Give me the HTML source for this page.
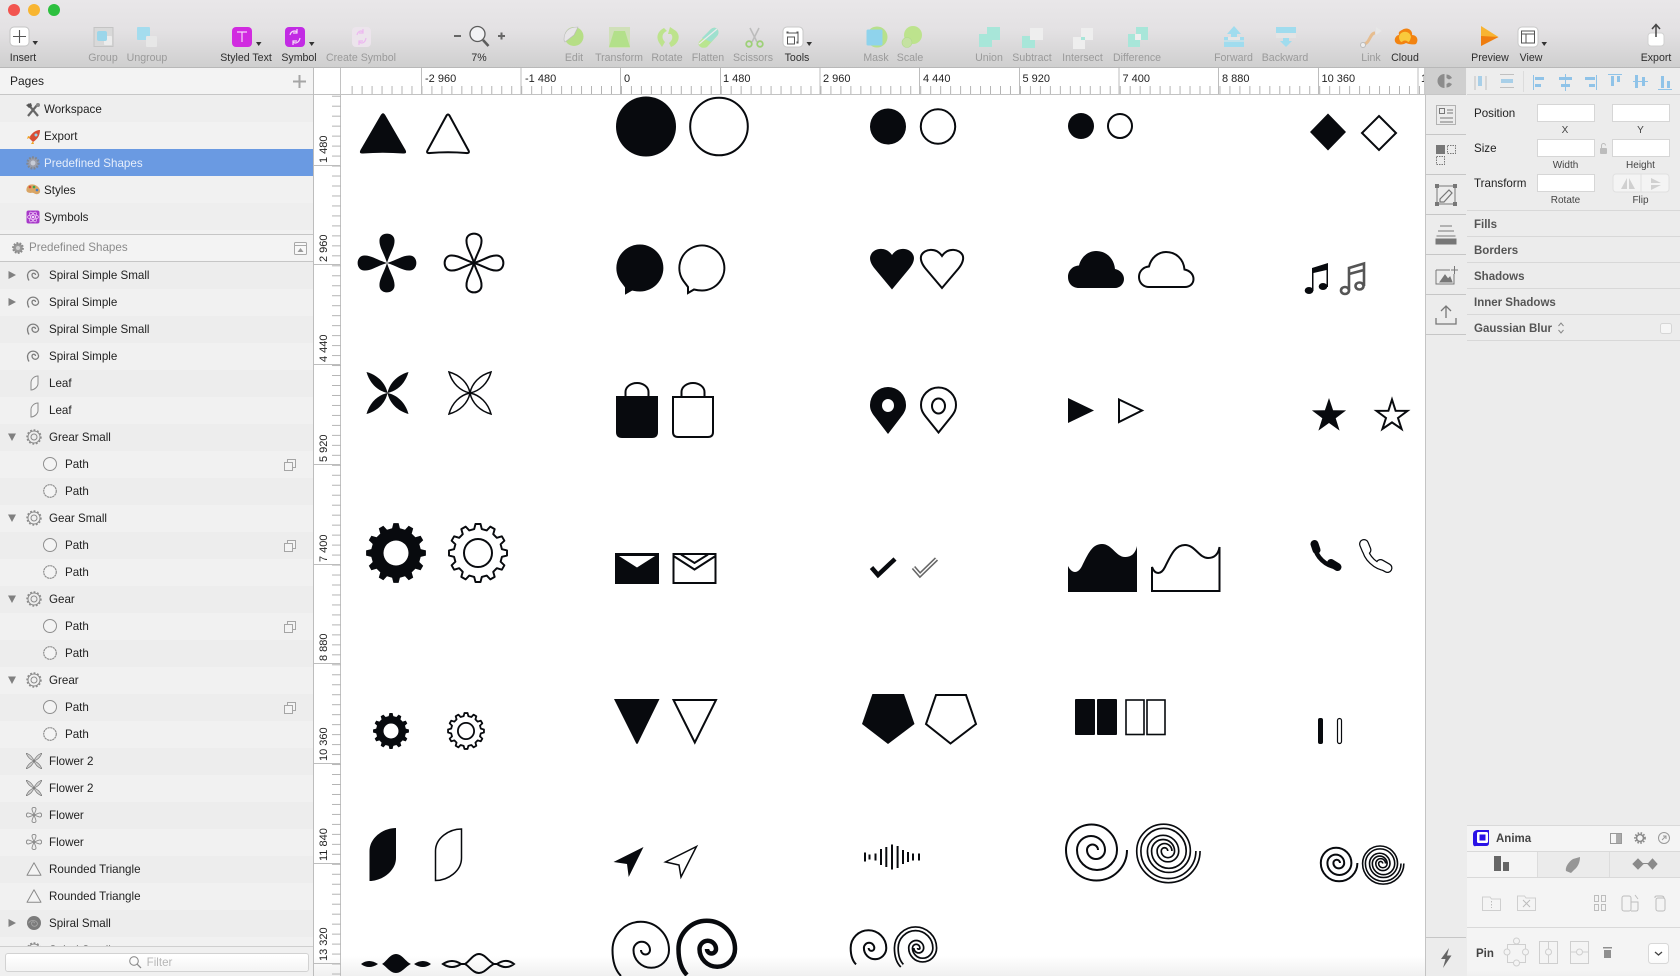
<!DOCTYPE html>
<html lang="en">
<head>
<meta charset="utf-8">
<title>Predefined Shapes</title>
<style>
html,body{margin:0;padding:0;width:1680px;height:976px;overflow:hidden;background:#fff}
#app{position:relative;width:1680px;height:976px;overflow:hidden;font-family:"Liberation Sans",sans-serif;color:#222;filter:blur(.3px)}
.abs{position:absolute}
#toolbar{left:0;top:0;width:1680px;height:67px;background:linear-gradient(#e9e7e9,#e3e1e3 45%,#cfcfcf);border-bottom:1px solid #b8b8b8}
#sidebar{left:0;top:68px;width:313px;height:908px;background:#f1f1f1;border-right:1px solid #bdbdbd}
.phead{position:absolute;left:0;top:0;width:313px;height:26px;background:#f3f3f3;border-bottom:1px solid #c6c6c6;font-size:12px;line-height:26px;text-indent:10px}
.pg{position:absolute;left:0;width:313px;height:27px;line-height:29px;font-size:11.6px;text-indent:44px}
.sel{background:#6a9ae2;color:#e6eefb}
.lhead{position:absolute;left:0;top:166px;width:313px;height:26px;background:#f3f3f3;border-top:1px solid #c6c6c6;border-bottom:1px solid #c6c6c6;font-size:11.6px;line-height:26px;text-indent:29px;color:#8b8b8b}
#layers{position:absolute;left:0;top:194px;width:313px;height:684px;overflow:hidden}
.r{position:relative;height:27px;line-height:27px;font-size:11.6px;text-indent:49px;background:#f1f1f1}
.r:nth-child(odd){background:#ededed}
.r.p{text-indent:65px}
.r svg{position:absolute;top:5px;left:26px;width:16px;height:16px}
.r.p svg.i{left:42px}
.r svg.d{left:7px;top:8px;width:10px;height:10px}
.r svg.c{left:283px;top:7px;width:14px;height:14px}
#filter{position:absolute;left:0;top:878px;width:313px;height:30px;background:#f0f0f0;border-top:1px solid #cfcfcf}
#finput{position:absolute;left:5px;top:6px;width:288px;padding-right:14px;height:17px;background:#fff;border:1px solid #d2d2d2;border-radius:3px;text-align:center;font-size:11.6px;line-height:17px;color:#b5b5b5}
#canvas{left:314px;top:68px;width:1112px;height:908px;background:#fff}
#strip{left:1425px;top:68px;width:41px;height:908px;background:#ececec;border-left:1px solid #c4c4c4;border-right:1px solid #c4c4c4}
#insp{left:1467px;top:68px;width:213px;height:908px;background:#ececec}
#over{left:0;top:0;width:1680px;height:976px;pointer-events:none}
#fade{left:0;top:956px;width:1680px;height:20px;background:linear-gradient(#fff,#f0f0f0);mix-blend-mode:darken;pointer-events:none}
svg text{font-family:"Liberation Sans",sans-serif}
.tl text{font-size:10.6px;text-anchor:middle;fill:#2e2e2e}
.tl text.o{fill:#9a9a9a}
.rl{font-size:11px;fill:#222}
.il{font-size:11.6px;fill:#222}
.is{font-size:10px;fill:#444;text-anchor:middle}
.ih{font-size:11.5px;font-weight:700;fill:#555}
.k{fill:#080a0e}
.s{fill:none;stroke:#080a0e;stroke-width:2}
</style>
</head>
<body>
<div id="app">

<svg width="0" height="0" style="position:absolute">
<defs>
<symbol id="i-sp" viewBox="0 0 16 16"><path d="M9.500 8A1.700 1.700 0 0 0 6 8A3.300 3.300 0 0 0 12.600 8A5.600 5.600 0 0 0 1.500 8C1.500 10 2 12 3 13.500" fill="none" stroke="#7d7d7d" stroke-width="1.300"/></symbol>
<symbol id="i-leaf" viewBox="0 0 16 16"><path d="M12 1V8.500C12 12 8 15 5 15V7.500C5 4 8.500 1 12 1Z" fill="#f4f4f4" stroke="#8c8c8c" stroke-width="1"/></symbol>
<symbol id="i-gear" viewBox="0 0 16 16"><circle cx="8" cy="8" r="6" fill="none" stroke="#8a8a8a" stroke-width="1"/><circle cx="8" cy="8" r="7" fill="none" stroke="#8a8a8a" stroke-width="1.400" stroke-dasharray="1.800 1.800"/><circle cx="8" cy="8" r="3" fill="none" stroke="#8a8a8a" stroke-width="1"/></symbol>
<symbol id="i-c" viewBox="0 0 16 16"><circle cx="8" cy="8" r="6.500" fill="#f4f4f4" stroke="#8f8f8f" stroke-width="1"/></symbol>
<symbol id="i-cd" viewBox="0 0 16 16"><circle cx="8" cy="8" r="6.300" fill="#f4f4f4" stroke="#8f8f8f" stroke-width="1.200" stroke-dasharray="2.200 .5"/></symbol>
<symbol id="i-x" viewBox="0 0 16 16"><path d="M8 8C9 5 11 2 16 0 14 5 11 7 8 8ZM8 8C7 5 5 2 0 0 2 5 5 7 8 8ZM8 8C9 11 11 14 16 16 14 11 11 9 8 8ZM8 8C7 11 5 14 0 16 2 11 5 9 8 8Z" fill="#d5d5d5" stroke="#808080" stroke-width=".8"/></symbol>
<symbol id="i-f" viewBox="0 0 16 16"><path d="M8 8C7 5 5.800 3 6 1.800 6.300 0 9.700 0 10 1.800 10.200 3 9 5 8 8ZM8 8C7 11 5.800 13 6 14.200 6.300 16 9.700 16 10 14.200 10.200 13 9 11 8 8ZM8 8C5 7 3 5.800 1.800 6 0 6.300 0 9.700 1.800 10 3 10.200 5 9 8 8ZM8 8C11 7 13 5.800 14.200 6 16 6.300 16 9.700 14.200 10 13 10.200 11 9 8 8Z" fill="#efefef" stroke="#8a8a8a" stroke-width=".9"/></symbol>
<symbol id="i-t" viewBox="0 0 16 16"><path d="M8 1.800 15 14.200H1Z" fill="#f4f4f4" stroke="#8a8a8a" stroke-width="1" stroke-linejoin="round"/></symbol>
<symbol id="i-ss" viewBox="0 0 16 16"><circle cx="8" cy="8" r="7" fill="#7b7b7b"/><path d="M8.500 8.300A1.500 1.500 0 0 0 5.500 8.300A3 3 0 0 0 11.500 8.300A5 5 0 0 0 2.500 8.300" fill="none" stroke="#a4a4a4" stroke-width=".9"/></symbol>
<symbol id="i-cp" viewBox="0 0 14 14"><rect x="4.500" y="1.500" width="8" height="8" fill="#f4f4f4" stroke="#a5a5a5"/><rect x="1.500" y="4.500" width="8" height="8" fill="#f4f4f4" stroke="#a5a5a5"/></symbol>
<symbol id="d-r" viewBox="0 0 10 10"><path d="M1.500 1 9 5 1.500 9Z" fill="#808080"/></symbol>
<symbol id="d-d" viewBox="0 0 10 10"><path d="M1 1.500H9L5 9Z" fill="#808080"/></symbol>
<path id="petal" d="M0 0C-3 -10 -8 -16 -7.500 -23C-7 -31.500 7 -31.500 7.500 -23C8 -16 3 -10 0 0Z"/>
<path id="xpet" d="M0 0C2 -10 10 -18 21 -21C18 -10 10 -2 0 0Z"/>
<path id="spiral" d="M5 0A5.500 5.500 0 0 0 -6 0A9 9 0 0 0 12 0A14 14 0 0 0 -16 0A20 20 0 0 0 24 0A25.500 25.500 0 0 0 -27 0A30.500 30.500 0 0 0 34 0"/>
<path id="spiral2" d="M1 0A4.500 4.500 0 0 0 10 0A8.250 8.250 0 0 0 -6.500 0A17.750 17.750 0 0 0 29 0A28.250 28.250 0 0 0 -27.500 0C-27.500 10 -25 20 -19 26"/>
<path id="gearp" stroke-linejoin="round" d="M29.900 2.600L24.700 3.900 23.300 9 27.200 12.700 24.600 17.200 19.400 15.700 15.700 19.400 17.200 24.600 12.700 27.200 9 23.300 3.900 24.700 2.600 29.900-2.600 29.900-3.900 24.700-9 23.300-12.700 27.200-17.200 24.600-15.700 19.400-19.400 15.700-24.600 17.200-27.200 12.700-23.300 9-24.700 3.900-29.900 2.600-29.900 -2.600-24.700 -3.900-23.300 -9-27.200 -12.700-24.600 -17.200-19.400 -15.700-15.700 -19.400-17.200 -24.600-12.700 -27.200-9 -23.300-3.900 -24.700-2.600 -29.900 2.600 -29.900 3.900 -24.700 9 -23.300 12.700 -27.200 17.200 -24.600 15.700 -19.400 19.400 -15.700 24.600 -17.200 27.200 -12.700 23.300 -9 24.700 -3.900 29.900 -2.600Z"/>
</defs>
</svg>

<div class="abs" id="toolbar"></div>

<div class="abs" id="sidebar">
  <div class="phead">Pages</div>
  <div class="pg" style="top:27px;background:#eeeeee">Workspace</div>
  <div class="pg" style="top:54px;background:#f2f2f2">Export</div>
  <div class="pg sel" style="top:81px">Predefined Shapes</div>
  <div class="pg" style="top:108px;background:#f1f1f1">Styles</div>
  <div class="pg" style="top:135px;background:#eeeeee">Symbols</div>
  <div class="lhead">Predefined Shapes</div>
  <div id="layers">
    <div class="r"><svg class="d"><use href="#d-r"/></svg><svg class="i"><use href="#i-sp"/></svg>Spiral Simple Small</div>
    <div class="r"><svg class="d"><use href="#d-r"/></svg><svg class="i"><use href="#i-sp"/></svg>Spiral Simple</div>
    <div class="r"><svg class="i"><use href="#i-sp"/></svg>Spiral Simple Small</div>
    <div class="r"><svg class="i"><use href="#i-sp"/></svg>Spiral Simple</div>
    <div class="r"><svg class="i"><use href="#i-leaf"/></svg>Leaf</div>
    <div class="r"><svg class="i"><use href="#i-leaf"/></svg>Leaf</div>
    <div class="r"><svg class="d"><use href="#d-d"/></svg><svg class="i"><use href="#i-gear"/></svg>Grear Small</div>
    <div class="r p"><svg class="i"><use href="#i-c"/></svg>Path<svg class="c"><use href="#i-cp"/></svg></div>
    <div class="r p"><svg class="i"><use href="#i-cd"/></svg>Path</div>
    <div class="r"><svg class="d"><use href="#d-d"/></svg><svg class="i"><use href="#i-gear"/></svg>Gear Small</div>
    <div class="r p"><svg class="i"><use href="#i-c"/></svg>Path<svg class="c"><use href="#i-cp"/></svg></div>
    <div class="r p"><svg class="i"><use href="#i-cd"/></svg>Path</div>
    <div class="r"><svg class="d"><use href="#d-d"/></svg><svg class="i"><use href="#i-gear"/></svg>Gear</div>
    <div class="r p"><svg class="i"><use href="#i-c"/></svg>Path<svg class="c"><use href="#i-cp"/></svg></div>
    <div class="r p"><svg class="i"><use href="#i-cd"/></svg>Path</div>
    <div class="r"><svg class="d"><use href="#d-d"/></svg><svg class="i"><use href="#i-gear"/></svg>Grear</div>
    <div class="r p"><svg class="i"><use href="#i-c"/></svg>Path<svg class="c"><use href="#i-cp"/></svg></div>
    <div class="r p"><svg class="i"><use href="#i-cd"/></svg>Path</div>
    <div class="r"><svg class="i"><use href="#i-x"/></svg>Flower 2</div>
    <div class="r"><svg class="i"><use href="#i-x"/></svg>Flower 2</div>
    <div class="r"><svg class="i"><use href="#i-f"/></svg>Flower</div>
    <div class="r"><svg class="i"><use href="#i-f"/></svg>Flower</div>
    <div class="r"><svg class="i"><use href="#i-t"/></svg>Rounded Triangle</div>
    <div class="r"><svg class="i"><use href="#i-t"/></svg>Rounded Triangle</div>
    <div class="r"><svg class="d"><use href="#d-r"/></svg><svg class="i"><use href="#i-ss"/></svg>Spiral Small</div>
    <div class="r"><svg class="i"><use href="#i-gear"/></svg>Spiral Small</div>
  </div>
  <div id="filter"><div id="finput"><svg width="14" height="14" viewBox="0 0 14 14" style="vertical-align:-3px;margin-right:5px"><circle cx="6" cy="6" r="4.300" fill="none" stroke="#8c8c8c" stroke-width="1.100"/><path d="M9.200 9.200 13 13" stroke="#8c8c8c" stroke-width="1.300"/></svg>Filter</div></div>
</div>

<div class="abs" id="canvas"></div>
<div class="abs" id="strip"></div>
<div class="abs" id="insp"></div>

<svg class="abs" id="over" width="1680" height="976" viewBox="0 0 1680 976">
<!-- Window buttons -->
<circle cx="14" cy="10" r="6" fill="#f2544f"/><circle cx="34" cy="10" r="6" fill="#f8b531"/><circle cx="54" cy="10" r="6" fill="#2dc03f"/>

<!-- Rulers -->
<rect x="314" y="68" width="1111" height="26" fill="#fff"/>
<rect x="314" y="68" width="27" height="908" fill="#fff"/>
<path d="M314 94.500H1425M340.500 68V976" stroke="#c2c2c2" fill="none"/>
<defs>
<pattern id="hmin" x="321.700" y="0" width="9.975" height="8" patternUnits="userSpaceOnUse"><rect width="1" height="8" fill="#b4b4b4"/></pattern>
<pattern id="vmin" x="0" y="65.800" width="9" height="9.975" patternUnits="userSpaceOnUse"><rect width="9" height="1" fill="#b4b4b4"/></pattern>
</defs>
<g transform="translate(0,86)"><rect x="351" y="0" width="1074" height="8" fill="url(#hmin)"/></g>
<g transform="translate(332,0)"><rect x="0" y="95" width="9" height="881" fill="url(#vmin)"/></g>
<path d="M421.500 68V94M521 68V94M620.500 68V94M720.500 68V94M820 68V94M919.500 68V94M1019.500 68V94M1119 68V94M1218.500 68V94M1318.500 68V94M1418 68V94" stroke="#bdbdbd" fill="none"/>
<path d="M314 165.500H341M314 264.500H341M314 364.500H341M314 464.500H341M314 564.500H341M314 663.500H341M314 763.500H341M314 863.500H341M314 963.500H341" stroke="#bdbdbd" fill="none"/>
<g class="rl">
<text x="425" y="82">-2 960</text><text x="525" y="82">-1 480</text><text x="624" y="82">0</text><text x="723" y="82">1 480</text><text x="823" y="82">2 960</text><text x="923" y="82">4 440</text><text x="1022.500" y="82">5 920</text><text x="1122.500" y="82">7 400</text><text x="1222" y="82">8 880</text><text x="1321.500" y="82">10 360</text><text x="1421" y="82">11 840</text>
</g>
<rect x="1424" y="68" width="2" height="26" fill="#ccc"/>
<g class="rl">
<text transform="translate(327,163) rotate(-90)">1 480</text>
<text transform="translate(327,262) rotate(-90)">2 960</text>
<text transform="translate(327,362) rotate(-90)">4 440</text>
<text transform="translate(327,462) rotate(-90)">5 920</text>
<text transform="translate(327,562) rotate(-90)">7 400</text>
<text transform="translate(327,661) rotate(-90)">8 880</text>
<text transform="translate(327,761) rotate(-90)">10 360</text>
<text transform="translate(327,861) rotate(-90)">11 840</text>
<text transform="translate(327,961) rotate(-90)">13 320</text>
</g>

<!-- Toolbar labels -->
<g class="tl">
<text x="23" y="61">Insert</text>
<text class="o" x="103" y="61">Group</text><text class="o" x="147" y="61">Ungroup</text>
<text x="246" y="61">Styled Text</text><text x="299" y="61">Symbol</text><text class="o" x="361" y="61">Create Symbol</text>
<text x="479" y="61">7%</text>
<text class="o" x="574" y="61">Edit</text><text class="o" x="619" y="61">Transform</text><text class="o" x="667" y="61">Rotate</text><text class="o" x="708" y="61">Flatten</text><text class="o" x="753" y="61">Scissors</text><text x="797" y="61">Tools</text>
<text class="o" x="876" y="61">Mask</text><text class="o" x="910" y="61">Scale</text>
<text class="o" x="989" y="61">Union</text><text class="o" x="1032" y="61">Subtract</text><text class="o" x="1082.500" y="61">Intersect</text><text class="o" x="1137" y="61">Difference</text>
<text class="o" x="1233.500" y="61">Forward</text><text class="o" x="1285" y="61">Backward</text>
<text class="o" x="1371" y="61">Link</text><text x="1405" y="61">Cloud</text>
<text x="1490" y="61">Preview</text><text x="1531" y="61">View</text><text x="1656" y="61">Export</text>
</g>

<!-- Toolbar icons -->
<rect x="10" y="27" width="19" height="19" rx="4" fill="#fff" stroke="#c4c4c4"/><path d="M19.500 30V43M13 36.500H26" stroke="#555" stroke-width="1.100"/>
<path d="M32.500 41H38L35.200 45Z" fill="#333"/>
<rect x="94" y="27.500" width="19" height="19" fill="#d9d9d9" stroke="#c4c4c4"/><rect x="104" y="36" width="8" height="9" rx="1" fill="#ececec"/><rect x="97" y="31" width="10" height="10" rx="2" fill="#9bd6ea"/>
<rect x="137" y="27" width="13" height="13" rx="1" fill="#a4dcee"/><rect x="146" y="36" width="11" height="11" rx="1" fill="#e7e7e7"/>
<rect x="232" y="27" width="20" height="20" rx="4" fill="#d12be0"/><path d="M237 32H247M242 32V42" stroke="#f6d7f8" stroke-width="1.200"/>
<path d="M256 42H261.500L258.700 46Z" fill="#333"/>
<rect x="285" y="27" width="20" height="20" rx="4" fill="#c22be4"/><path d="M290 35C291 31 295 30 297 32M300 38C299 43 295 44 293 42M297 29V33H293M293 45V41H297" fill="none" stroke="#f4dcf8" stroke-width="1.200"/>
<path d="M309 42H314.500L311.700 46Z" fill="#333"/>
<rect x="352" y="27" width="19" height="20" rx="4" fill="#ece4ec"/><path d="M357 35C358 31 361 30 363 32M366 38C365 43 362 44 359 42M363 29V33H359M359 45V41H363" fill="none" stroke="#ecb7f0" stroke-width="1.200"/>
<path d="M454 36H461M498 36H505M501.500 32.500V39.500" stroke="#666" stroke-width="2"/>
<circle cx="477.500" cy="34" r="7.500" fill="#f2f2f4" stroke="#5c5c5c" stroke-width="1.300"/><path d="M483 40 488.500 46" stroke="#5c5c5c" stroke-width="2.600"/>
<circle cx="574" cy="36.500" r="9.500" fill="#b6de86"/><path d="M564 40C564 30 570 27 578 27L574 35 565 42Z" fill="#e7e5e7" stroke="#bcbcbc" stroke-width=".6"/>
<rect x="609" y="27" width="21" height="21" fill="#d0e0b9"/><path d="M614 31H625L630 47H609Z" fill="#b3e08a"/>
<path d="M664 28C658 31 655 37 660 44L662 47L665 42C661 38 662 33 667 31ZM670 27L676 31C682 37 677 45 671 47L669 43C673 40 673 36 671 34L668 34Z" fill="#bde38d"/>
<path d="M701 40 711 29C716 25 721 31 717 36L707 47C701 50 695 44 701 40Z" fill="#b9e58f"/><path d="M702 38 711 29C716 25 721 31 717 36L711 42Z" fill="#9fe0cf"/><path d="M699 44 717 29" stroke="#eceaec" stroke-width="1.200"/>
<path d="M750 28 757 42M759 28 752 42" stroke="#bdbdbd" stroke-width="1.600"/><circle cx="749" cy="44" r="2.800" fill="none" stroke="#9dd077" stroke-width="1.800"/><circle cx="760" cy="44" r="2.800" fill="none" stroke="#9dd077" stroke-width="1.800"/>
<rect x="783" y="27" width="20" height="20" rx="4" fill="#fff" stroke="#c8c8c8"/><rect x="787.500" y="37" width="7" height="7" fill="none" stroke="#555"/><path d="M788 33H797M798 33V43" stroke="#555"/><rect x="786.500" y="31.500" width="2" height="2" fill="#555"/><rect x="796.500" y="31.500" width="2" height="2" fill="#555"/><rect x="796.500" y="41.500" width="2" height="2" fill="#555"/>
<path d="M806.500 42H812L809.200 46Z" fill="#333"/>
<circle cx="877" cy="37" r="10.500" fill="#b7e08c"/><rect x="866.500" y="29.500" width="16" height="16" rx="1.500" fill="#8fd3ec"/>
<circle cx="913" cy="35" r="9" fill="#bde38d"/><circle cx="907" cy="42.500" r="5" fill="#c5e2a2" stroke="#b0d98a" stroke-width=".6"/>
<path d="M987 27H1000V40H992V47H979V34H987Z" fill="#a8e6d9"/>
<rect x="1022" y="36" width="13" height="12" fill="#a8e6d9"/><rect x="1030" y="28" width="13" height="12" fill="#eeeeee"/>
<rect x="1073" y="37" width="12" height="12" fill="#eeeeee"/><rect x="1081" y="28" width="12" height="12" fill="#eeeeee"/><rect x="1081" y="37" width="4" height="3" fill="#a8e6d9"/>
<path d="M1136 27H1148V40H1140V47H1128V34H1136Z" fill="#a8e6d9"/><rect x="1135" y="34" width="6" height="6" fill="#eeeeee"/>
<path d="M1234 26 1241 34H1237V37H1244V47H1224V37H1231V34H1227Z" fill="#a0dcee"/><rect x="1228" y="37" width="12" height="3" fill="#e6e6e6"/><path d="M1224 41H1244" stroke="#e6e6e6"/>
<rect x="1276" y="27" width="20" height="6" fill="#a0dcee"/><rect x="1276" y="33" width="20" height="5" fill="#e4e4e4"/><path d="M1283 38H1289V41H1292L1286 47 1280 41H1283Z" fill="#a0dcee"/>
<path d="M1364 44C1370 43 1370 33 1375 33" fill="none" stroke="#e6bd90" stroke-width="3"/><path d="M1376 27 1382 31 1376 35Z" fill="#e7e7e7"/><circle cx="1363" cy="45" r="2.500" fill="#eee" stroke="#bbb"/>
<path d="M1402 30C1408 26 1413 31 1412 35 1417 35 1419 40 1416 44 1413 45 1408 44 1406 43 1403 45 1398 45 1396 43 1393 40 1396 35 1399 35 1398 32 1400 31 1402 30Z" fill="#f28311"/><path d="M1399 37C1400 30 1410 30 1411 37 1410 41 1409 42 1408 42 1407 40 1403 40 1402 42 1400 42 1399 39 1399 37Z" fill="#f9c93c"/>
<path d="M1481 26 1498.500 37 1481 46Z" fill="#f8b431"/><path d="M1481 36 1498.500 37 1481 46Z" fill="#ef7d10"/>
<rect x="1518" y="27" width="20" height="20" rx="4" fill="#fff" stroke="#c8c8c8"/><rect x="1521.500" y="31" width="13" height="12" fill="none" stroke="#555"/><path d="M1521.500 34H1534.500M1526 34V43" stroke="#555"/>
<path d="M1541.500 42H1547L1544.200 46Z" fill="#333"/>
<rect x="1648" y="33" width="16" height="13" rx="3" fill="#fff" stroke="#d0d0d0"/><path d="M1656 25V37M1652 29 1656 24.500 1660 29" fill="none" stroke="#444" stroke-width="1.500"/>

<!-- Pages icons -->
<path d="M28 104 38 116M38 104 28 116" stroke="#666" stroke-width="2.200"/><path d="M26 105 31 103 32 106 29 108Z" fill="#555"/><circle cx="38" cy="105" r="2" fill="#888"/>
<path d="M40 130C35 130 31 134 29 138L33 142C36 140 40 137 40 130Z" fill="#d74c35"/><path d="M31 137 28 136 27 139ZM33 141 34 144 31 144Z" fill="#f0a324"/><circle cx="36" cy="135" r="1.500" fill="#8fd3ec"/>
<circle cx="33" cy="163" r="5.500" fill="#9a9eab" stroke="#7f8794" stroke-width="2.400" stroke-dasharray="1.800 1.300"/><circle cx="33" cy="163" r="2.500" fill="#c7ccd6"/>
<path d="M26.500 189C27 184 33 183 37 186 41 189 41 193 38 194 35 195 34 192 31 193 27 193 26 191 26.500 189Z" fill="#d9a565"/><circle cx="30" cy="187" r="1.300" fill="#d64a34"/><circle cx="34" cy="187" r="1.300" fill="#3aa24e"/><circle cx="37" cy="190" r="1.300" fill="#3b7cd4"/>
<rect x="26.500" y="210.500" width="13" height="13" rx="2" fill="#a738c9"/><circle cx="33" cy="217" r="1.300" fill="#f3d4fa"/><ellipse cx="33" cy="217" rx="5.500" ry="2.300" fill="none" stroke="#f0c8f8" stroke-width=".7"/><ellipse cx="33" cy="217" rx="5.500" ry="2.300" fill="none" stroke="#f0c8f8" stroke-width=".7" transform="rotate(60 33 217)"/><ellipse cx="33" cy="217" rx="5.500" ry="2.300" fill="none" stroke="#f0c8f8" stroke-width=".7" transform="rotate(-60 33 217)"/>
<path d="M299.500 75V88M293 81.500H306" stroke="#a5a5a5" stroke-width="2"/>
<circle cx="18" cy="248" r="4.800" fill="#9a9a9a" stroke="#8a8a8a" stroke-width="2.200" stroke-dasharray="1.700 1.300"/><circle cx="18" cy="248" r="2" fill="#cfcfcf"/>
<rect x="294.500" y="242.500" width="12" height="12" rx="1" fill="#f8f8f8" stroke="#a9a9a9"/><path d="M294.500 245.500H306.500" stroke="#a9a9a9"/><path d="M297.500 252H303.500L300.500 248Z" fill="#9a9a9a"/>

<!-- Canvas shapes row 1 -->
<path class="k" id="tri" d="M380.500 115.500Q383 111 385.500 115.500L405.500 150Q407.500 154 403 153.500Q383 152 363 153.500Q358.500 154 360.500 150Z"/>
<path class="s" d="M446 116.500Q448 112.500 450 116.500L468.500 150.500Q470 153.500 466 153Q448 151.500 430 153Q426 153.500 427.500 150.500Z"/>
<circle class="k" cx="646" cy="126.500" r="30"/>
<circle class="s" cx="719" cy="126.500" r="28.800"/>
<circle class="k" cx="888" cy="126.500" r="18"/>
<circle class="s" cx="938" cy="126.500" r="17.200"/>
<circle class="k" cx="1081" cy="126" r="13"/>
<circle class="s" cx="1120" cy="126" r="12"/>
<path class="k" d="M1328 113.500 1346 132 1328 150.500 1310 132Z"/>
<path class="s" d="M1379 116 1396 133 1379 150 1362 133Z"/>

<!-- Row 2 -->
<g class="k" transform="translate(387,263)"><use href="#petal"/><use href="#petal" transform="rotate(90)"/><use href="#petal" transform="rotate(180)"/><use href="#petal" transform="rotate(270)"/></g>
<g class="s" transform="translate(474,263)"><use href="#petal"/><use href="#petal" transform="rotate(90)"/><use href="#petal" transform="rotate(180)"/><use href="#petal" transform="rotate(270)"/></g>
<path class="k" stroke="#080a0e" stroke-width="2" d="M621.500 281 626 287 626 293 632 289.500Q636 290.500 640 290.500A22.500 22.500 0 1 0 621.500 281Z"/>
<path class="s" d="M683.500 281 688 287 688 293 694 289.500Q698 290.500 702 290.500A22.500 22.500 0 1 0 683.500 281Z"/>
<path class="k" d="M892 289.500 875 269C870 263 869 258 871 254.500 874 248 886 246 892 255 898 246 910 248 913 254.500 915 258 914 263 909 269Z"/>
<path class="s" d="M942 288 925.500 268.500C921 263 920 258 921.500 255 924.500 249 936 247 942 256 948 247 959.500 249 962.500 255 964 258 963 263 958.500 268.500Z"/>
<path class="k" d="M1079 288C1072 288 1068 283 1068 277 1068 271 1072 266 1079 265.500 1081 257 1088 251 1096 251 1106 251 1114 258 1115 269 1120 270 1124 274 1124 279 1124 284 1120 288 1115 288Z"/>
<path class="s" d="M1149 287C1143 287 1139 282.500 1139 277 1139 271.500 1143 267 1149 266.500 1151 258 1158 252 1166 252 1176 252 1183.500 259 1184.500 269.500 1189.500 270.500 1193.500 274 1193.500 279 1193.500 284 1189.500 287 1185 287Z"/>
<g><ellipse class="k" cx="1309" cy="290.500" rx="4.300" ry="3.500"/><ellipse class="k" cx="1323" cy="286.500" rx="4.300" ry="3.500"/><path class="k" d="M1312 268 1328 263V287H1326.500V270L1313.500 273V291H1312Z"/></g>
<g fill="none" stroke="#555" stroke-width="2.600"><ellipse cx="1345" cy="290.500" rx="4" ry="3.500"/><ellipse cx="1359.500" cy="286" rx="4" ry="3.500"/><path d="M1349 290.500V268L1364 263.500V286M1349 274 1364 270"/></g>

<!-- Row 3 -->
<g class="k" transform="translate(387.500,393)"><use href="#xpet"/><use href="#xpet" transform="rotate(90)"/><use href="#xpet" transform="rotate(180)"/><use href="#xpet" transform="rotate(270)"/></g>
<g class="s" style="stroke-width:1.500" transform="translate(470,393)"><use href="#xpet"/><use href="#xpet" transform="rotate(90)"/><use href="#xpet" transform="rotate(180)"/><use href="#xpet" transform="rotate(270)"/></g>
<path class="k" d="M616 396H658V432Q658 438 652 438H622Q616 438 616 432Z"/>
<path class="s" d="M625.500 397V392A11.500 9 0 0 1 648.500 392V397"/>
<path class="s" d="M673 397H713V432Q713 437 708 437H678Q673 437 673 432Z"/>
<path class="s" d="M681.500 397V392A11.500 9 0 0 1 704.500 392V397"/>
<path class="k" fill-rule="evenodd" d="M888 434 875 417C871 412 870 409 870 405A18 18 0 0 1 906 405C906 409 905 412 901 417ZM888 399A6 6.500 0 1 0 888 412A6 6.500 0 1 0 888 399Z"/>
<path class="s" d="M938.500 432.500 926 417C922 412 921 409 921 405A17.500 17.500 0 0 1 956 405C956 409 955 412 951 417Z"/>
<ellipse class="s" cx="938.500" cy="406" rx="6.500" ry="7.500"/>
<path class="k" d="M1068 398 1094 410.500 1068 423Z"/>
<path class="s" d="M1119 399.500 1142 410.500 1119 422Z"/>
<polygon class="k" points="1329,398 1333.100,410.300 1346.100,410.400 1335.700,418.200 1339.600,430.600 1329,423 1318.400,430.600 1322.300,418.200 1311.900,410.400 1324.900,410.300"/>
<polygon class="s" points="1392,399.500 1395.600,410.800 1407.500,410.900 1398,418 1401.600,429 1392,422.400 1382.400,429 1386,418 1376.500,410.900 1388.400,410.800"/>

<!-- Row 4 -->
<g transform="translate(396,553)"><use href="#gearp" class="k"/><circle r="12.500" fill="#fff"/></g>
<g transform="translate(478,553)"><use href="#gearp" fill="none" stroke="#080a0e" stroke-width="2" transform="scale(.97)"/><circle class="s" r="14"/></g>
<path class="k" d="M615 553H659V584H615Z"/><path d="M619 556H655L637 567.500Z" fill="#fff"/>
<rect class="s" x="673.500" y="554" width="42" height="29"/><path class="s" d="M673.500 556 694.500 569.500 715.500 556M681 554.500 694.500 563 708 554.500"/>
<path d="M871.500 567.500 878 575 895 559" fill="none" stroke="#080a0e" stroke-width="4.500"/>
<path d="M913.500 567.500 920 575 936.500 559" fill="none" stroke="#666" stroke-width="4.500"/><path d="M913.500 567.500 920 575 936.500 559" fill="none" stroke="#fff" stroke-width="1.400"/>
<path class="k" d="M1068 592V566C1072 574 1078 574 1082 566 1088 554 1092 544 1102 544 1112 544 1116 557 1125 557 1130 557 1135 555 1137 546V592Z"/>
<path class="s" d="M1152 591V567C1155 575 1161 575 1165 567 1171 555 1175 545 1185 545 1195 545 1199 558 1208 558 1213 558 1218 556 1219.500 547V591Z"/>
<g fill="none" stroke="#080a0e" stroke-linecap="round"><path d="M1315 547C1316 557 1326 566 1336 567" stroke-width="4.500"/><path d="M1314.500 544 1316.500 550M1331 563 1337.500 567" stroke-width="8"/></g>
<g fill="none" stroke-linecap="round"><g stroke="#080a0e"><path d="M1365 548C1366 558 1376 567 1386 568" stroke-width="7"/><path d="M1364 544 1366.500 550M1380.500 564 1387.500 568" stroke-width="10"/></g><g stroke="#fff"><path d="M1365 548C1366 558 1376 567 1386 568" stroke-width="4.500"/><path d="M1364 544 1366.500 550M1380.500 564 1387.500 568" stroke-width="7.500"/></g></g>

<!-- Row 5 -->
<g transform="translate(391,731) scale(.6)"><use href="#gearp" class="k"/><circle r="12.500" fill="#fff"/></g>
<g transform="translate(466,731) scale(.6)"><use href="#gearp" fill="none" stroke="#080a0e" stroke-width="3"/><circle r="13.500" fill="none" stroke="#080a0e" stroke-width="3"/></g>
<path class="k" d="M614 699H659.500L638 743Q637 745 636 743Z"/>
<path class="s" d="M673.500 700H716L694.800 742.500Z"/>
<path class="k" d="M872.400 694H904L914.500 724 888 744 862 724Z"/>
<path class="s" d="M936 695H966L976 724 950.500 743.500 926 724Z"/>
<rect class="k" x="1075" y="699" width="20" height="36" rx="1"/><rect class="k" x="1097" y="699" width="20" height="36" rx="1"/>
<rect class="s" style="stroke-width:1.600" x="1126" y="700" width="18" height="34.500"/><rect class="s" style="stroke-width:1.600" x="1147" y="700" width="18" height="34.500"/>
<rect class="k" x="1318" y="718" width="5" height="26" rx="2"/>
<rect class="s" style="stroke-width:1.200" x="1337.500" y="718.500" width="4" height="25" rx="2"/>

<!-- Row 6 -->
<path class="k" d="M396 828V858C396 871 382 881 369.500 881V851C369.500 838 383 828 396 828Z"/>
<path class="s" style="stroke-width:1.500" d="M461.500 829V858C461.500 871 448 880.500 435.500 880.500V851C435.500 838 449 829 461.500 829Z"/>
<path class="k" d="M643.500 847 613.500 862 627 864 628.700 877Z"/>
<path class="s" style="stroke-width:1.500" d="M696.500 846.500 665.500 862 679 865 681 877Z"/>
<path fill="none" stroke="#080a0e" stroke-width="2" d="M865 852.500V861.500M869.500 854.500V859.500M875.500 853.500V860.500M881 849V865M886.300 847V867M892 844.500V869.500M897.600 846V868M903 850V864M908 852V862M913 853.500V860.500M919 853.500V860.500"/>
<use href="#spiral" transform="translate(1093,850)" class="s"/>
<g transform="translate(1165,851) scale(.97)" fill="none"><use href="#spiral" stroke="#080a0e" stroke-width="6"/><use href="#spiral" stroke="#fff" stroke-width="2.600"/></g>
<use href="#spiral" transform="translate(1337,863) scale(.6)" fill="none" stroke="#080a0e" stroke-width="3.300"/>
<g transform="translate(1381,863.500) scale(.63)" fill="none"><use href="#spiral" stroke="#080a0e" stroke-width="7"/><use href="#spiral" stroke="#fff" stroke-width="2"/></g>

<!-- Row 7 -->
<path class="k" d="M361 964C366 960 372 960 378 964L382 964C386 962 390 954 396 954 402 954 406 962 411 964L414 964C420 960 426 960 431 964 426 968 420 968 414 964L411 964C406 966 402 973 396 973 390 973 386 966 382 964L378 964C372 968 366 968 361 964Z"/>
<path class="s" d="M443 964C449 960 455 960 461 964L465 964C469 962 473 954 479 954 485 954 489 962 494 964L497 964C503 960 509 960 514 964 509 968 503 968 497 964L494 964C489 966 485 973 479 973 473 973 469 966 465 964L461 964C455 968 449 968 443 964Z"/>
<use href="#spiral2" transform="translate(640,950)" class="s"/>
<use href="#spiral2" transform="translate(706,949)" fill="none" stroke="#080a0e" stroke-width="4.500"/>
<use href="#spiral2" transform="translate(868,948) scale(.63)" fill="none" stroke="#080a0e" stroke-width="3.200"/>
<g transform="translate(915,948) scale(.68)" fill="none"><use href="#spiral2" stroke="#080a0e" stroke-width="8"/><use href="#spiral2" stroke="#fff" stroke-width="3"/></g>

<!-- Canvas right edge / strip -->
<rect x="1426" y="68" width="40" height="26" fill="#cfcfcf"/>
<path d="M1444.500 74A7 7 0 0 0 1444.500 88ZM1446.500 74.500A6.500 6.500 0 0 1 1452 78L1449 79.500 1446.500 78ZM1446.500 87.500A6.500 6.500 0 0 0 1452 84L1449 82.500 1446.500 84Z" fill="#8c8c8c"/>
<path d="M1426 94.500H1466M1426 134.500H1466M1426 174.500H1466M1426 214.500H1466M1426 254.500H1466M1426 294.500H1466M1426 334.500H1466M1426 937.500H1466" stroke="#c6c6c6"/>
<g fill="none" stroke="#777">
<rect x="1436.500" y="105.500" width="19" height="19" stroke-dasharray="1 1"/><path d="M1440 118H1453M1440 122H1453M1447 110H1453M1447 113H1453"/><rect x="1439.500" y="108.500" width="5" height="5"/>
<rect x="1436.500" y="145.500" width="8" height="8" fill="#777"/><rect x="1447.500" y="145.500" width="8" height="8" stroke-dasharray="1.500 1"/><rect x="1436.500" y="156.500" width="8" height="8" stroke-dasharray="1.500 1"/>
<rect x="1437" y="186" width="18" height="18"/><path d="M1440 199 1449 190 1452 193 1444 202H1440Z" stroke-width="1.200"/><rect x="1435.500" y="184.500" width="3" height="3" fill="#777"/><rect x="1453.500" y="184.500" width="3" height="3" fill="#777"/><rect x="1453.500" y="202.500" width="3" height="3" fill="#777"/><rect x="1435.500" y="202.500" width="3" height="3" fill="#777"/>
<path d="M1440 226H1452M1438 231H1454M1436.500 236H1455.500"/><rect x="1436" y="239" width="20" height="5" fill="#777"/>
<path d="M1436 270V284H1454V274M1436 270H1450M1451 270H1458M1454.500 266V274"/><path d="M1440 282 1445 275 1448 279 1450 277 1452 282Z" fill="#777"/>
<path d="M1436 318V324H1456V318M1446 318V306M1441 311 1446 306 1451 311" stroke-width="1.300"/>
</g>
<path d="M1449 948 1441 959H1445.500L1443 968 1451.500 955.500H1447Z" fill="#666"/>

<!-- Inspector -->
<path d="M1467 94.500H1680" stroke="#d4d4d4"/>
<rect x="1467" y="68" width="213" height="26" fill="#ededed"/>
<path d="M1523.500 71V92" stroke="#dcdcdc"/>
<g fill="none" stroke="#c0c0c0"><path d="M1475 76V90M1486 76V90M1500 74.500H1514M1500 87.500H1514"/></g>
<rect x="1478" y="76" width="4" height="10" fill="#a8cfe8"/><rect x="1501" y="79" width="12" height="4" fill="#a8cfe8"/>
<g fill="#8fc3e8" stroke="none">
<rect x="1533" y="75" width="1" height="15"/><rect x="1535" y="77" width="9" height="3"/><rect x="1535" y="84" width="6" height="3"/>
<rect x="1565" y="74" width="1" height="17"/><rect x="1559" y="77" width="13" height="3"/><rect x="1561" y="84" width="9" height="3"/>
<rect x="1596" y="75" width="1" height="15"/><rect x="1585" y="77" width="10" height="3"/><rect x="1589" y="84" width="6" height="3"/>
<rect x="1608" y="74" width="14" height="1"/><rect x="1611" y="76" width="3" height="10"/><rect x="1617" y="76" width="3" height="6"/>
<rect x="1633" y="81" width="15" height="1"/><rect x="1635" y="75" width="3" height="13"/><rect x="1642" y="77" width="3" height="9"/>
<rect x="1658" y="89" width="14" height="1"/><rect x="1661" y="76" width="3" height="12"/><rect x="1667" y="81" width="3" height="7"/>
</g>
<text class="il" x="1474" y="117">Position</text>
<text class="il" x="1474" y="152">Size</text>
<text class="il" x="1474" y="187">Transform</text>
<g fill="#fff" stroke="#d6d6d6">
<rect x="1537.500" y="104.500" width="57" height="17"/><rect x="1612.500" y="104.500" width="57" height="17"/>
<rect x="1537.500" y="139.500" width="57" height="17"/><rect x="1612.500" y="139.500" width="57" height="17"/>
<rect x="1537.500" y="174.500" width="57" height="17"/>
</g>
<rect x="1613" y="174" width="56" height="18" rx="3" fill="#f4f4f4" stroke="#e0e0e0"/><path d="M1641 174V192" stroke="#e0e0e0"/>
<path d="M1627 178V189H1621ZM1629 178 1635 189H1629Z" fill="#d0d0d0"/><path d="M1651 178 1661 183H1651ZM1651 185H1661L1651 190Z" fill="#d0d0d0"/>
<g class="is"><text x="1565" y="133">X</text><text x="1640.500" y="133">Y</text><text x="1565.500" y="168">Width</text><text x="1640.500" y="168">Height</text><text x="1565.500" y="203">Rotate</text><text x="1640.500" y="203">Flip</text></g>
<rect x="1600" y="148" width="7" height="6" rx="1" fill="#bcbcbc"/><path d="M1601.500 148V145.500A2 2 0 0 1 1605.500 145.500" fill="none" stroke="#bcbcbc"/>
<path d="M1467 210.500H1680M1467 236.500H1680M1467 262.500H1680M1467 288.500H1680M1467 314.500H1680M1467 340.500H1680" stroke="#d8d8d8"/>
<g class="ih"><text x="1474" y="228">Fills</text><text x="1474" y="254">Borders</text><text x="1474" y="280">Shadows</text><text x="1474" y="306">Inner Shadows</text><text x="1474" y="332">Gaussian Blur</text></g>
<path d="M1558.500 326 1561 323 1563.500 326M1558.500 330 1561 333 1563.500 330" fill="none" stroke="#888"/>
<rect x="1660.500" y="323.500" width="11" height="10" rx="2" fill="#f6f6f6" stroke="#d6d6d6"/>

<!-- Anima -->
<rect x="1467" y="825" width="213" height="151" fill="#f4f4f4"/>
<path d="M1467 825.500H1680M1467 851.500H1680M1467 877.500H1680M1467 927.500H1680" stroke="#d9d9d9"/>
<rect x="1537" y="852" width="143" height="25" fill="#ebebeb"/><path d="M1537.500 852V877M1609.500 852V877" stroke="#dcdcdc"/>
<path d="M1477 830H1489V843Q1489 846 1486 846H1476Q1473 847 1473 843V834Q1473 831 1477 830Z" fill="#2a12e6"/><rect x="1477" y="832" width="11" height="11" rx="1.500" fill="#fff"/><rect x="1479.500" y="834.500" width="6" height="6" fill="#2a12e6"/>
<text x="1496" y="842" style="font-size:11.500px;font-weight:700;fill:#444">Anima</text>
<rect x="1610.500" y="833.500" width="11" height="10" fill="#f6f6f6" stroke="#999"/><rect x="1616" y="834" width="5" height="9" fill="#aaa"/>
<circle cx="1640" cy="838" r="3.500" fill="none" stroke="#8a8a8a" stroke-width="1.600"/><circle cx="1640" cy="838" r="5" fill="none" stroke="#8a8a8a" stroke-width="1.800" stroke-dasharray="1.500 1.500"/>
<circle cx="1664" cy="838" r="5.500" fill="none" stroke="#999"/><path d="M1662 840 1666 836M1663 836H1666V839" fill="none" stroke="#999"/>
<path d="M1494 856H1501V871H1494ZM1503 862H1509V871H1503Z" fill="#666"/>
<path d="M1566 871C1565 868 1568 862 1573 859L1580 857C1580 862 1578 867 1574 870L1571 873ZM1566 866 1570 863 1566 866Z" fill="#969696"/>
<path d="M1633 864 1638 859 1643 864 1638 869ZM1648 864 1652.500 859 1657 864 1652.500 869ZM1641 863.500H1650" fill="#8a8a8a" stroke="#8a8a8a" stroke-width="1"/>
<g fill="none" stroke="#cfcfcf">
<path d="M1482.500 897V910.500H1500.500V899H1491.500L1490 897Z"/><path d="M1517.500 896V910.500H1535.500V898H1526L1524.500 896Z"/><path d="M1523 900 1530 907M1530 900 1523 907" stroke="#bcbcbc"/>
<path d="M1491.500 901V908" stroke="#bbb" stroke-dasharray="1.500 1.500"/>
<g stroke="#bdbdbd"><rect x="1594.500" y="895.500" width="4" height="6"/><rect x="1601.500" y="895.500" width="4" height="6"/><rect x="1594.500" y="904.500" width="4" height="6"/><rect x="1601.500" y="904.500" width="4" height="6"/>
<rect x="1622" y="896" width="9" height="15" rx="2"/><path d="M1631 902H1638V909Q1638 911 1636 911H1631M1635 895 1638 899"/>
<rect x="1656" y="898" width="9" height="13" rx="2"/><path d="M1655 898V897Q1655 896 1657 896H1661Q1664 896 1664 898"/></g>
</g>
<text x="1476" y="957" style="font-size:11.500px;font-weight:700;fill:#444">Pin</text>
<g fill="none" stroke="#cfcfcf">
<rect x="1507.500" y="944.500" width="18" height="18"/><circle cx="1516.500" cy="941" r="3" fill="#f4f4f4"/><circle cx="1516.500" cy="963" r="3" fill="#f4f4f4"/><circle cx="1507" cy="952" r="3" fill="#f4f4f4"/><circle cx="1525.500" cy="952" r="3" fill="#f4f4f4"/>
<rect x="1539.500" y="941.500" width="18" height="22"/><path d="M1548.500 941.500V963.500"/><circle cx="1548.500" cy="952" r="3" fill="#f4f4f4"/>
<rect x="1570.500" y="941.500" width="18" height="22"/><path d="M1570.500 952H1588.500"/><circle cx="1579.500" cy="952" r="3" fill="#f4f4f4"/>
</g>
<path d="M1603 947H1612V948.500H1603ZM1604 950H1611V958H1604Z" fill="#8f8f8f"/>
<rect x="1648.500" y="943.500" width="20" height="20" rx="3" fill="#fff" stroke="#d8d8d8"/><path d="M1655 952 1658.500 955 1662 952" fill="none" stroke="#444" stroke-width="1.300"/>
</svg>

<div class="abs" id="fade"></div>
</div>
</body>
</html>
